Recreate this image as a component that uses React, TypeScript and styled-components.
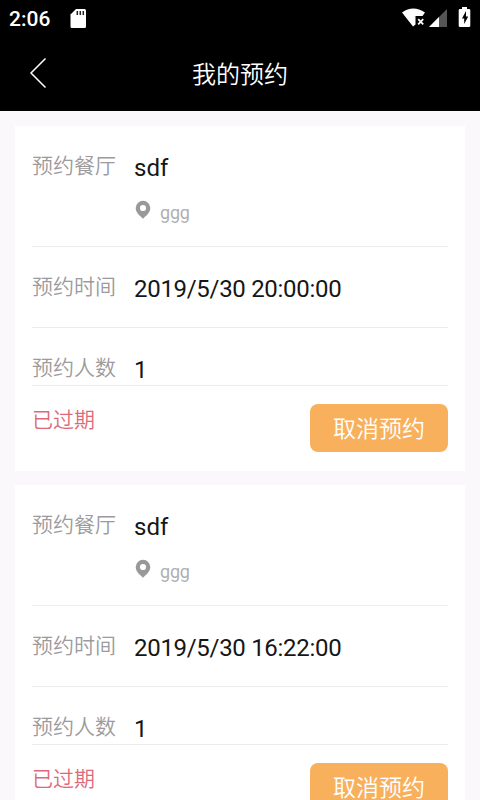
import React from "react";
import styled, { createGlobalStyle } from "styled-components";

const GlobalStyle = createGlobalStyle`
  * { box-sizing: border-box; }
  html, body { margin: 0; padding: 0; }
  body {
    background: #faf8fb;
    font-family: Roboto, "Noto Sans CJK SC", sans-serif;
    overflow: hidden;
  }
`;

const Screen = styled.div`
  width: 480px;
  height: 800px;
  overflow: hidden;
  background: #faf8fb;
`;

const StatusBar = styled.div`
  display: flex;
  align-items: flex-start;
  height: 36px;
  padding: 0 8px 0 9px;
  background: #000;
  color: #fff;
`;

const Clock = styled.span`
  width: 61px;
  padding-top: 7px;
  font-size: 21px;
  line-height: 24px;
  font-weight: 500;
`;

const StatusIcons = styled.div`
  display: flex;
  margin-left: auto;
`;

const NavBar = styled.header`
  display: grid;
  grid-template-columns: 80px 1fr 80px;
  height: 75px;
  background: #000;
  color: #fff;
`;

const BackButton = styled.button`
  display: flex;
  padding: 21px 0 0 29px;
  border: 0;
  background: none;
`;

const Title = styled.h1`
  margin: 0;
  padding-top: 21px;
  font-size: 24px;
  line-height: 36px;
  font-weight: 350;
  text-align: center;
`;

const List = styled.main`
  display: flex;
  flex-direction: column;
  gap: 14px;
  padding: 15px;
`;

const Card = styled.article`
  height: 345px;
  flex: none;
  padding: 0 17px;
  background: #fff;
`;

const Row = styled.div<{ $height: number }>`
  display: flex;
  height: ${(p) => p.$height}px;
  border-bottom: 1px solid #ececec;
`;

const Label = styled.span`
  width: 102px;
  padding-top: 25px;
  font-size: 21px;
  line-height: 30px;
  font-weight: 350;
  color: #9c9a9c;
`;

const Value = styled.div<{ $tight?: boolean }>`
  padding-top: 27px;
  font-size: 24px;
  line-height: 30px;
  letter-spacing: ${(p) => (p.$tight ? "-0.3px" : "0")};
  color: #161616;
`;

const Place = styled.div`
  display: flex;
  align-items: flex-start;
  gap: 9px;
  padding: 17px 0 0 1px;
  font-size: 18px;
  line-height: 25px;
  letter-spacing: -0.2px;
  color: #b0b0b0;
`;

const Footer = styled.footer`
  display: flex;
  justify-content: space-between;
  align-items: flex-start;
  padding-top: 18px;
`;

const Status = styled.span`
  padding-top: 1px;
  font-size: 21px;
  line-height: 30px;
  font-weight: 350;
  color: #dc6a7a;
`;

const CancelButton = styled.button`
  width: 138px;
  height: 48px;
  padding: 4px 0 0;
  border: 0;
  border-radius: 8px;
  background: #f8b05c;
  color: #fff;
  font-family: inherit;
  font-size: 23px;
  line-height: 44px;
  font-weight: 350;
`;

const SdCardIcon = () => (
  <svg width="17" height="36" viewBox="0 0 17 36">
    <path d="M6 9h8.500q1.500 0 1.500 1.500v16q0 1.500-1.500 1.500h-12.500q-1.500 0-1.500-1.500V14.500z" fill="#fff" />
    <path d="M7.300 11v4M10.300 11v4M13.300 11v4" stroke="#222" strokeWidth="1.500" />
  </svg>
);

const SystemIcons = () => (
  <svg width="72" height="36" viewBox="400 0 72 36">
    <path d="M402 12.500Q413 4.500 425 12.500L422.500 16H415.500V24.500L413 26.500Z" fill="#fff" />
    <path d="M418.200 19.200l5 5.200M423.200 19.200l-5 5.200" stroke="#fff" strokeWidth="1.700" />
    <path d="M447 9v18h-18z" fill="#555" />
    <path d="M439 17v10h-10z" fill="#fff" />
    <path d="M462 7h5v2h2q1.300 0 1.300 1.300v15.400q0 1.300-1.300 1.300h-9q-1.300 0-1.300-1.300V10.300Q458.700 9 460 9h2z" fill="#fff" />
    <path d="M466 11l-4 7.500h2.200V24l4-7.500H466z" fill="#000" />
  </svg>
);

const BackIcon = () => (
  <svg width="18" height="32" viewBox="0 0 18 32">
    <path d="M16.500 1.500L2 16l14.500 14.500" fill="none" stroke="#fff" strokeWidth="1.500" />
  </svg>
);

const PinIcon = () => (
  <svg width="16" height="19" viewBox="0 0 16 19">
    <path
      d="M8 0.800a7.300 7.300 0 0 0-7.300 7.300c0 4.500 4 7.600 7.300 10.700 3.300-3.100 7.300-6.200 7.300-10.700A7.300 7.300 0 0 0 8 .8zM8 4.900a3.100 3.100 0 1 1 0 6.200 3.100 3.100 0 0 1 0-6.200z"
      fill="#999"
      fillRule="evenodd"
    />
  </svg>
);

interface Booking {
  restaurant: string;
  place: string;
  time: string;
  people: number;
}

const bookings: Booking[] = [
  { restaurant: "sdf", place: "ggg", time: "2019/5/30 20:00:00", people: 1 },
  { restaurant: "sdf", place: "ggg", time: "2019/5/30 16:22:00", people: 1 },
];

const BookingCard = ({ booking }: { booking: Booking }) => (
  <Card>
    <Row $height={121}>
      <Label>预约餐厅</Label>
      <Value>
        {booking.restaurant}
        <Place>
          <PinIcon />
          <span>{booking.place}</span>
        </Place>
      </Value>
    </Row>
    <Row $height={81}>
      <Label>预约时间</Label>
      <Value $tight>{booking.time}</Value>
    </Row>
    <Row $height={58}>
      <Label>预约人数</Label>
      <Value>{booking.people}</Value>
    </Row>
    <Footer>
      <Status>已过期</Status>
      <CancelButton>取消预约</CancelButton>
    </Footer>
  </Card>
);

export default function App() {
  return (
    <>
      <GlobalStyle />
      <Screen>
        <StatusBar>
          <Clock>2:06</Clock>
          <SdCardIcon />
          <StatusIcons>
            <SystemIcons />
          </StatusIcons>
        </StatusBar>
        <NavBar>
          <BackButton aria-label="返回">
            <BackIcon />
          </BackButton>
          <Title>我的预约</Title>
        </NavBar>
        <List>
          {bookings.map((booking) => (
            <BookingCard key={booking.time} booking={booking} />
          ))}
        </List>
      </Screen>
    </>
  );
}
